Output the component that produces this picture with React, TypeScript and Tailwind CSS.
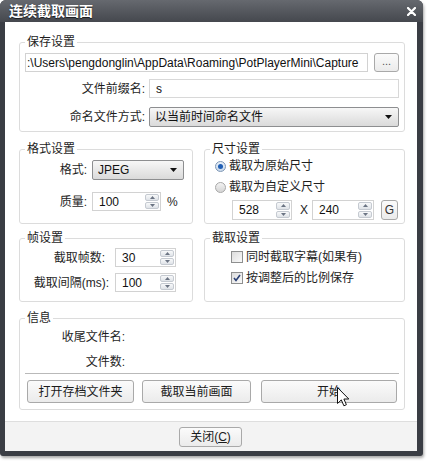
import React from 'react';

function Group({ title, className, children }: { title: string; className?: string; children: React.ReactNode }) {
    return (
        <fieldset className={`min-w-0 rounded-[3px] border border-[#dcdcdc] px-[5px] ${className ?? ''}`}>
            <legend className="px-[2px] text-[12px] leading-[14px] text-[#1e1e1e]">{title}</legend>
            {children}
        </fieldset>
    );
}

function Spin() {
    return (
        <div className="flex h-full w-[15px] flex-col gap-[1px] py-[1px] pr-[1px]">
            <div className="flex flex-1 items-center justify-center rounded-[2px] border border-[#c5cad1] bg-gradient-to-b from-[#f8f9fa] to-[#dfe3e8]">
                <svg width="5" height="3" viewBox="0 0 5 3">
                    <path d="M0 3L2.5 0L5 3Z" fill="#6b7483" />
                </svg>
            </div>
            <div className="flex flex-1 items-center justify-center rounded-[2px] border border-[#c5cad1] bg-gradient-to-b from-[#f8f9fa] to-[#dfe3e8]">
                <svg width="5" height="3" viewBox="0 0 5 3">
                    <path d="M0 0L2.5 3L5 0Z" fill="#6b7483" />
                </svg>
            </div>
        </div>
    );
}

function Select({ value, className }: { value: string; className?: string }) {
    return (
        <div className={`flex h-[20px] items-center justify-between rounded-[2px] border border-[#8d8e90] bg-gradient-to-b from-[#f7f7f7] to-[#dadada] pl-[5px] pr-[6px] ${className ?? ''}`}>
            <span className="text-[12px] leading-[14px] text-[#111]">{value}</span>
            <svg width="7" height="4" viewBox="0 0 7 4">
                <path d="M0 0H7L3.5 4Z" fill="#111" />
            </svg>
        </div>
    );
}

function Btn({ label, className }: { label: React.ReactNode; className?: string }) {
    return (
        <div className={`flex items-center justify-center rounded-[3px] border border-[#a9a9a9] bg-gradient-to-b from-[#fbfbfb] to-[#ebebeb] text-[12px] leading-[14px] text-[#1b1b1b] ${className ?? ''}`}>
            {label}
        </div>
    );
}

export default function App() {
    return (
        <div className="h-[461px] w-[427px] bg-white font-['Liberation_Sans','Noto_Sans_CJK_SC',sans-serif]">
            <div className="flex h-[456px] w-[423px] flex-col overflow-hidden rounded-t-[6px] rounded-b-[3px] bg-[#3a3d44] shadow-[1px_2px_3px_rgba(0,0,0,0.35)]">
                {/* 标题栏 */}
                <div className="flex h-[22px] shrink-0 items-center justify-between bg-gradient-to-b from-[#66696f] to-[#45484e] pl-[9px] pr-[7px]">
                    <span className="text-[14px] font-bold leading-[16px] text-white [text-shadow:0_1px_1px_rgba(0,0,0,0.7)]">
                        连续截取画面
                    </span>
                    <svg width="9" height="9" viewBox="0 0 9 9" className="mt-[1px]">
                        <path d="M1 1L8 8M8 1L1 8" stroke="#fff" strokeWidth="2.2" strokeLinecap="round" />
                    </svg>
                </div>

                {/* 内容区域 */}
                <div className="mb-[5px] ml-[5px] mr-[6px] flex flex-1 flex-col bg-white">
                    <div className="pl-[14px] pr-[12px]">
                        {/* 保存设置 */}
                        <Group title="保存设置" className="mt-[13px] pb-[4px] pt-[4px]">
                            <div className="flex h-[19px] gap-[6px]">
                                <div className="flex flex-1 items-center overflow-hidden border border-[#d2d2d2] bg-white pl-[1px]">
                                    <span className="whitespace-nowrap text-[12px] leading-[14px] text-[#111]">
                                        :\Users\pengdonglin\AppData\Roaming\PotPlayerMini\Capture
                                    </span>
                                </div>
                                <Btn label={<span className="-mt-[3px] text-[11px] text-[#555]">...</span>} className="w-[25px]" />
                            </div>
                            <div className="mt-[7px] flex h-[19px] items-center">
                                <span className="w-[120px] text-right text-[12px] leading-[14px] text-[#1e1e1e]">文件前缀名:</span>
                                <div className="ml-[4px] flex h-full flex-1 items-center border border-[#d8d8d8] bg-white pl-[6px]">
                                    <span className="text-[12px] leading-[14px] text-[#111]">s</span>
                                </div>
                            </div>
                            <div className="mt-[9px] flex items-center">
                                <span className="w-[120px] text-right text-[12px] leading-[14px] text-[#1e1e1e]">命名文件方式:</span>
                                <Select value="以当前时间命名文件" className="ml-[4px] flex-1" />
                            </div>
                        </Group>

                        {/* 格式设置 + 尺寸设置 */}
                        <div className="mt-[10px] flex gap-[11px]">
                            <Group title="格式设置" className="w-[174px] pt-[4px]">
                                <div className="flex items-center">
                                    <span className="w-[62px] text-right text-[12px] leading-[14px] text-[#1e1e1e]">格式:</span>
                                    <Select value="JPEG" className="ml-[5px] w-[92px]" />
                                </div>
                                <div className="mt-[12px] flex h-[19px] items-center">
                                    <span className="w-[62px] text-right text-[12px] leading-[14px] text-[#1e1e1e]">质量:</span>
                                    <div className="ml-[5px] flex h-full w-[69px] items-center justify-between border border-[#d2d2d2] bg-white pl-[6px]">
                                        <span className="text-[12px] leading-[14px] text-[#111]">100</span>
                                        <Spin />
                                    </div>
                                    <span className="ml-[6px] text-[12px] leading-[14px] text-[#1e1e1e]">%</span>
                                </div>
                            </Group>
                            <Group title="尺寸设置" className="flex-1 pb-[3px] pt-[1px]">
                                <div className="flex h-[18px] items-center pl-[5px]">
                                    <span className="flex h-[11px] w-[11px] items-center justify-center rounded-full border border-[#7e97b5] bg-gradient-to-b from-[#e9f1fa] to-[#c7d7ea]">
                                        <span className="h-[5px] w-[5px] rounded-full bg-[#1f5fb5]" />
                                    </span>
                                    <span className="ml-[3px] text-[12px] leading-[14px] text-[#1e1e1e]">截取为原始尺寸</span>
                                </div>
                                <div className="mt-[3px] flex h-[18px] items-center pl-[5px]">
                                    <span className="h-[11px] w-[11px] rounded-full border border-[#a8a8a8] bg-gradient-to-b from-[#f3f3f3] to-[#d4d4d4]" />
                                    <span className="ml-[3px] text-[12px] leading-[14px] text-[#1e1e1e]">截取为自定义尺寸</span>
                                </div>
                                <div className="mt-[4px] flex h-[20px] items-center pl-[22px]">
                                    <div className="flex h-full w-[60px] items-center justify-between border border-[#d2d2d2] bg-white pl-[6px]">
                                        <span className="text-[12px] leading-[14px] text-[#111]">528</span>
                                        <Spin />
                                    </div>
                                    <span className="ml-[8px] text-[12px] leading-[14px] text-[#1e1e1e]">X</span>
                                    <div className="ml-[4px] flex h-full w-[62px] items-center justify-between border border-[#d2d2d2] bg-white pl-[6px]">
                                        <span className="text-[12px] leading-[14px] text-[#111]">240</span>
                                        <Spin />
                                    </div>
                                    <Btn label="G" className="ml-[7px] h-full w-[17px] text-[#333]" />
                                </div>
                            </Group>
                        </div>

                        {/* 帧设置 + 截取设置 */}
                        <div className="mt-[7px] flex gap-[11px]">
                            <Group title="帧设置" className="w-[174px] pb-[9px] pt-[3px]">
                                <div className="flex h-[19px] items-center">
                                    <span className="w-[80px] text-right text-[12px] leading-[14px] text-[#1e1e1e]">截取帧数:</span>
                                    <div className="ml-[10px] flex h-full w-[61px] items-center justify-between border border-[#d2d2d2] bg-white pl-[6px]">
                                        <span className="text-[12px] leading-[14px] text-[#111]">30</span>
                                        <Spin />
                                    </div>
                                </div>
                                <div className="mt-[6px] flex h-[19px] items-center">
                                    <span className="w-[84px] whitespace-nowrap text-right text-[12px] leading-[14px] text-[#1e1e1e]">截取间隔(ms):</span>
                                    <div className="ml-[6px] flex h-full w-[61px] items-center justify-between border border-[#d2d2d2] bg-white pl-[6px]">
                                        <span className="text-[12px] leading-[14px] text-[#111]">100</span>
                                        <Spin />
                                    </div>
                                </div>
                            </Group>
                            <Group title="截取设置" className="flex-1 pt-[4px]">
                                <div className="flex h-[16px] items-center pl-[21px]">
                                    <span className="h-[12px] w-[12px] border border-[#8e8f8f] bg-gradient-to-br from-[#dcdcdc] to-[#fafafa]" />
                                    <span className="ml-[3px] text-[12px] leading-[14px] text-[#1e1e1e]">同时截取字幕(如果有)</span>
                                </div>
                                <div className="mt-[5px] flex h-[16px] items-center pl-[21px]">
                                    <span className="flex h-[12px] w-[12px] items-center justify-center border border-[#8e8f8f] bg-gradient-to-br from-[#dcdcdc] to-[#fafafa]">
                                        <svg width="8" height="8" viewBox="0 0 8 8">
                                            <path d="M1 4L3 6.5L7 1" fill="none" stroke="#2a3f74" strokeWidth="1.6" />
                                        </svg>
                                    </span>
                                    <span className="ml-[3px] text-[12px] leading-[14px] text-[#1e1e1e]">按调整后的比例保存</span>
                                </div>
                            </Group>
                        </div>

                        {/* 信息 */}
                        <Group title="信息" className="mt-[9px] pb-[6px] pt-[5px]">
                            <div className="flex h-[14px] items-center">
                                <span className="w-[100px] text-right text-[12px] leading-[14px] text-[#1e1e1e]">收尾文件名:</span>
                            </div>
                            <div className="mt-[11px] flex h-[14px] items-center">
                                <span className="w-[100px] text-right text-[12px] leading-[14px] text-[#1e1e1e]">文件数:</span>
                            </div>
                            <div className="mt-[4px] h-px bg-[#b9b9b9]" />
                            <div className="mt-[6px] flex h-[23px] pl-[2px]">
                                <Btn label="打开存档文件夹" className="w-[107px]" />
                                <Btn label="截取当前画面" className="ml-[8px] w-[109px]" />
                                <div className="relative ml-[10px] flex w-[136px]">
                                    <Btn label="开始" className="flex-1" />
                                    <svg width="13" height="20" viewBox="0 0 13 20" className="absolute left-[76px] top-[7px]">
                                        <path d="M0.5 0.5V16.5L4.3 12.9L6.9 18.8L9.4 17.7L6.9 12H11.8Z" fill="#fff" stroke="#111" strokeWidth="1" strokeLinejoin="round" />
                                    </svg>
                                </div>
                            </div>
                        </Group>
                    </div>

                    {/* 底部按钮栏 */}
                    <div className="mt-[11px] flex flex-1 items-center justify-center border-t border-[#dedede] bg-[#f3f3f3]">
                        <Btn label={<span>关闭(<span className="underline">C</span>)</span>} className="ml-[-1px] h-[20px] w-[63px]" />
                    </div>
                </div>
            </div>
        </div>
    );
}
